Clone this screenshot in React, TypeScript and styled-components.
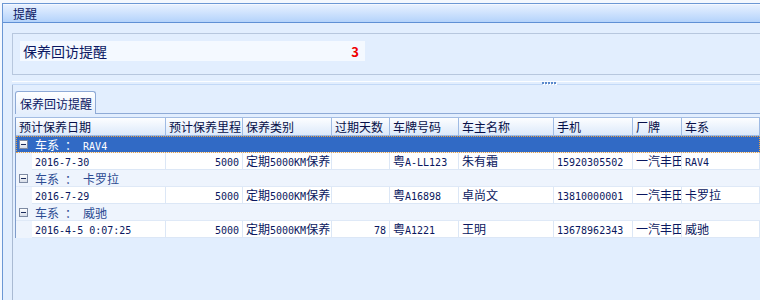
import React from "react";
import styled, { createGlobalStyle } from "styled-components";

const GlobalStyle = createGlobalStyle`
  html, body {
    margin: 0;
    padding: 0;
    background: #f4f8fe;
    font-family: "Noto Sans CJK SC", "Liberation Sans", sans-serif;
    font-size: 12px;
    color: #0a1760;
  }
  * { box-sizing: border-box; }
`;

const Page = styled.div`
  width: 760px;
  height: 300px;
  padding: 3px 0 0 2px;
  overflow: hidden;
`;

const Window = styled.div`
  height: 297px;
  border-top: 1px solid #6b97d4;
  border-left: 1px solid #6b97d4;
  background: #e2eefe;
  display: flex;
  flex-direction: column;
`;

const TitleBar = styled.div`
  height: 19px;
  padding-left: 10px;
  line-height: 18px;
  font-size: 12px;
  color: #0a1762;
  background: linear-gradient(#e6f0ff, #b4d3fb);
  border-top: 1px solid #f4f8ff;
  border-bottom: 1px solid #5f90d5;
`;

const Body = styled.div`
  flex: 1;
  display: flex;
  flex-direction: column;
  padding: 10px 0 0 9px;
`;

const GroupBox = styled.div`
  height: 42px;
  border: 1px solid #b7c7de;
  border-right: none;
  padding: 7px 7px;
`;

const AlertItem = styled.div`
  width: 345px;
  height: 20px;
  display: flex;
  align-items: center;
  justify-content: space-between;
  padding: 0 6px 0 3px;
  background: #f4f9ff;
  font-size: 14px;
  color: #0a1762;
`;

const Count = styled.span`
  color: #f00000;
  font-weight: bold;
  font-size: 13px;
`;

const Splitter = styled.div`
  margin-top: 6px;
  height: 4px;
  border-top: 1px solid #fbfdff;
  border-bottom: 1px solid #c3d9f7;
  display: flex;
  padding-left: 530px;
  gap: 1px;
`;

const Dot = styled.span`
  width: 2px;
  height: 2px;
  background: #5a88cb;
  box-shadow: 1px 1px 0 #ffffff;
`;

const BottomPanel = styled.div`
  flex: 1;
  border-left: 1px solid #a9bad3;
  padding: 6px 0 0 2px;
  display: flex;
  flex-direction: column;
`;

const TabStrip = styled.div`
  display: flex;
  border-bottom: 1px solid #8eaad6;
  height: 23px;
`;

const Tab = styled.div`
  width: 81px;
  height: 23px;
  margin-bottom: -1px;
  border: 1px solid #8eaad6;
  border-bottom: none;
  border-radius: 3px 3px 0 0;
  background: linear-gradient(#ffffff, #e4eefc);
  padding: 3px 0 0 4px;
  font-size: 12px;
  color: #0a1762;
`;

const TabPage = styled.div`
  flex: 1;
  padding-top: 3px;
`;

const Grid = styled.div`
  border-left: 1px solid #7f9ccb;
  border-top: 1px solid #a3bce2;
`;

// latin runs: SimSun-like half width (6px per char)
const Latin = styled.span`
  font-family: "DejaVu Sans Mono", "Liberation Mono", monospace;
  font-size: 10px;
`;

const mixed = (text: string) =>
  text
    .split(/([\x20-\x7e]+)/)
    .filter(Boolean)
    .map((part, i) =>
      /^[\x20-\x7e]+$/.test(part) ? <Latin key={i}>{part}</Latin> : <span key={i}>{part}</span>
    );

const cols = [150, 77, 89, 58, 69, 95, 79, 49, 78];

const HeaderRow = styled.div`
  display: flex;
  height: 18px;
  background: linear-gradient(#fdfeff, #dce9fa);
  border-bottom: 1px solid #9fbbe4;
`;

const HeaderCell = styled.div<{ $w: number }>`
  width: ${(p) => p.$w}px;
  flex-shrink: 0;
  padding-left: 3px;
  line-height: 17px;
  border-right: 1px solid #9fbbe4;
  color: #060f48;
  white-space: nowrap;
  overflow: hidden;
`;

const GroupRow = styled.div<{ $selected?: boolean }>`
  height: 17px;
  display: flex;
  align-items: center;
  padding-left: 3px;
  gap: 7px;
  background: ${(p) => (p.$selected ? "#316ac5" : "#eef4fd")};
  color: ${(p) => (p.$selected ? "#ffffff" : "#2b4a92")};
  outline: ${(p) => (p.$selected ? "1px dotted #e9a247" : "none")};
  outline-offset: -1px;
  border-bottom: 1px solid #dfe9f7;
  white-space: pre;
`;

const Collapse = styled.span`
  width: 9px;
  height: 9px;
  border: 1px solid #7d8aa3;
  background: linear-gradient(#ffffff, #d7dde8);
  display: flex;
  align-items: center;
  justify-content: center;
  &::after {
    content: "";
    width: 5px;
    height: 1px;
    background: #1c2c5c;
  }
`;

const DataRow = styled.div`
  height: 17px;
  display: flex;
  background: #eef4fd;
  padding-left: 16px;
`;

const Cell = styled.div<{ $w: number; $right?: boolean }>`
  width: ${(p) => p.$w}px;
  flex-shrink: 0;
  background: #ffffff;
  padding: 0 3px;
  line-height: 16px;
  border-right: 1px solid #dce7f6;
  border-bottom: 1px solid #dce7f6;
  text-align: ${(p) => (p.$right ? "right" : "left")};
  white-space: pre;
  overflow: hidden;
  color: #0a1760;
`;

const headers = [
  "预计保养日期",
  "预计保养里程",
  "保养类别",
  "过期天数",
  "车牌号码",
  "车主名称",
  "手机",
  "厂牌",
  "车系",
];

const groups = [
  {
    series: "RAV4",
    row: ["2016-7-30", "5000", "定期5000KM保养", "", "粤A-LL123", "朱有霜", "15920305502", "一汽丰田", "RAV4"],
  },
  {
    series: "卡罗拉",
    row: ["2016-7-29", "5000", "定期5000KM保养", "", "粤A16898", "卓尚文", "13810000001", "一汽丰田", "卡罗拉"],
  },
  {
    series: "威驰",
    row: ["2016-4-5 0:07:25", "5000", "定期5000KM保养", "78", "粤A1221", "王明", "13678962343", "一汽丰田", "威驰"],
  },
];

const rightAligned = [1, 3];

export default function App() {
  return (
    <>
      <GlobalStyle />
      <Page>
        <Window>
          <TitleBar>提醒</TitleBar>
          <Body>
            <GroupBox>
              <AlertItem>
                <span>保养回访提醒</span>
                <Count>3</Count>
              </AlertItem>
            </GroupBox>
            <Splitter>
              {[0, 1, 2, 3, 4].map((i) => (
                <Dot key={i} />
              ))}
            </Splitter>
            <BottomPanel>
              <TabStrip>
                <Tab>保养回访提醒</Tab>
              </TabStrip>
              <TabPage>
                <Grid>
                  <HeaderRow>
                    {headers.map((h, i) => (
                      <HeaderCell key={h} $w={cols[i]}>
                        {h}
                      </HeaderCell>
                    ))}
                  </HeaderRow>
                  {groups.map((g, gi) => (
                    <React.Fragment key={g.series}>
                      <GroupRow $selected={gi === 0}>
                        <Collapse />
                        <span>{mixed(`车系 ： ${g.series}`)}</span>
                      </GroupRow>
                      <DataRow>
                        {g.row.map((v, i) => (
                          <Cell
                            key={i}
                            $w={i === 0 ? cols[0] - 16 : cols[i]}
                            $right={rightAligned.includes(i)}
                          >
                            {mixed(v)}
                          </Cell>
                        ))}
                      </DataRow>
                    </React.Fragment>
                  ))}
                </Grid>
              </TabPage>
            </BottomPanel>
          </Body>
        </Window>
      </Page>
    </>
  );
}
